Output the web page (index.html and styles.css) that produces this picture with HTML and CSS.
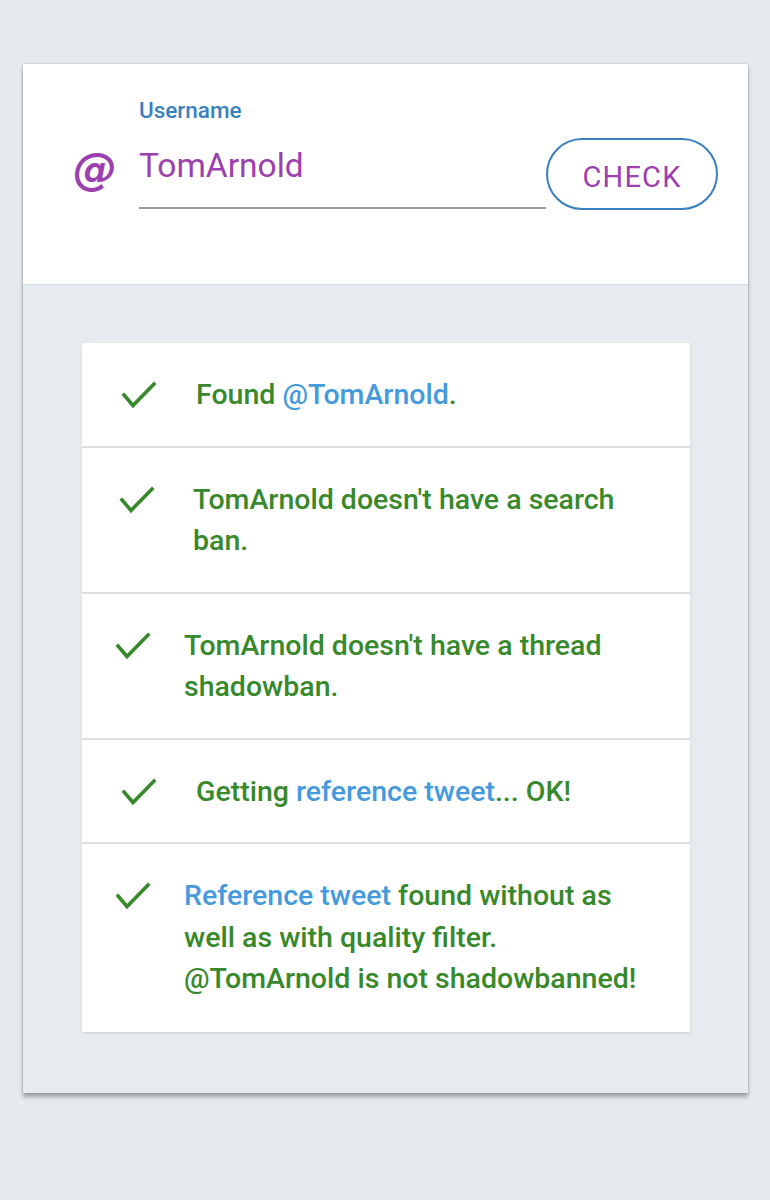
FILE: index.html
```html
<!DOCTYPE html>
<html lang="en">
<head>
<meta charset="utf-8">
<title>Shadowban check</title>
<link rel="stylesheet" href="styles.css">
</head>
<body>
<div class="card">
  <div class="header">
    <span class="at">@</span>
    <div class="field">
      <div class="label">Username</div>
      <div class="input">TomArnold</div>
    </div>
    <button class="check">CHECK</button>
  </div>
  <div class="results">
    <ul class="list">
      <li class="row row--a">
        <svg class="tick" viewBox="0 0 36 30" width="36" height="30"><polyline points="3,15 12,25.5 33,4"/></svg>
        <div class="msg">Found <span class="link">@TomArnold</span>.</div>
      </li>
      <li class="row row--b">
        <svg class="tick" viewBox="0 0 36 30" width="36" height="30"><polyline points="3,15 12,25.5 33,4"/></svg>
        <div class="msg">TomArnold doesn't have a search ban.</div>
      </li>
      <li class="row row--c">
        <svg class="tick" viewBox="0 0 36 30" width="36" height="30"><polyline points="3,15 12,25.5 33,4"/></svg>
        <div class="msg">TomArnold doesn't have a thread shadowban.</div>
      </li>
      <li class="row row--a">
        <svg class="tick" viewBox="0 0 36 30" width="36" height="30"><polyline points="3,15 12,25.5 33,4"/></svg>
        <div class="msg">Getting <span class="link">reference tweet</span>... OK!</div>
      </li>
      <li class="row row--c">
        <svg class="tick" viewBox="0 0 36 30" width="36" height="30"><polyline points="3,15 12,25.5 33,4"/></svg>
        <div class="msg"><span class="link">Reference tweet</span> found without as well as with quality filter. @TomArnold is not shadowbanned!</div>
      </li>
    </ul>
  </div>
</div>
</body>
</html>
```
FILE: styles.css
```css
html, body {
  margin: 0;
  padding: 0;
  background: #e6eaee;
}
body {
  padding: 64px 22px 100px 23px;
  font-family: Roboto, "Liberation Sans", sans-serif;
}
.card {
  width: 725px;
  background: #e6ebef;
  box-shadow: 0 4px 4px rgba(0, 0, 0, 0.3), 0 0 2px rgba(0, 0, 0, 0.2);
}
.header {
  box-sizing: border-box;
  height: 221px;
  background: #ffffff;
  border-bottom: 1px solid #d6dbe0;
  display: flex;
  align-items: flex-start;
  padding: 34px 30px 0 50px;
}
.at {
  width: 66px;
  flex: none;
  margin-top: 47px;
  font-family: "DejaVu Sans", sans-serif;
  font-weight: bold;
  font-style: italic;
  font-size: 44px;
  line-height: 48px;
  color: #9c3fb0;
}
.field {
  flex: 1;
  min-width: 0;
}
.label {
  font-size: 22.5px;
  line-height: 24px;
  font-weight: 500;
  color: #3a7fc0;
}
.input {
  margin-top: 20px;
  font-size: 33.5px;
  line-height: 48px;
  color: #9c3fb0;
  padding-bottom: 17px;
  border-bottom: 2px solid #9b9b9b;
}
.check {
  flex: none;
  box-sizing: border-box;
  width: 172px;
  height: 72px;
  margin-top: 40px;
  border: 2px solid #3a7fc0;
  border-radius: 36px;
  background: #ffffff;
  color: #9c3fb0;
  font-family: Roboto, "Liberation Sans", sans-serif;
  font-size: 29px;
  letter-spacing: 1.2px;
  padding: 5px 0 0;
}
.results {
  padding: 58px 58px 61px 59px;
}
.list {
  list-style: none;
  margin: 0;
  padding: 0;
  background: #ffffff;
  box-shadow: 0 1px 2px rgba(0, 0, 0, 0.12);
}
.row {
  display: flex;
  align-items: flex-start;
  padding: 31px 35px 30px 38px;
  border-bottom: 2px solid #dcdfe2;
}
.row:last-child {
  border-bottom: none;
  padding-bottom: 32px;
}
.row--a { padding-left: 39px; gap: 39px; }
.row--b { padding-left: 37px; gap: 38px; }
.row--c { padding-left: 33px; gap: 33px; }
.tick {
  flex: none;
  margin-top: 6px;
  fill: none;
  stroke: #37892b;
  stroke-width: 3.6;
  stroke-linecap: square;
}
.msg {
  font-size: 28.5px;
  line-height: 41.5px;
  font-weight: 500;
  color: #37892b;
}
.link {
  color: #4599dd;
}
```
